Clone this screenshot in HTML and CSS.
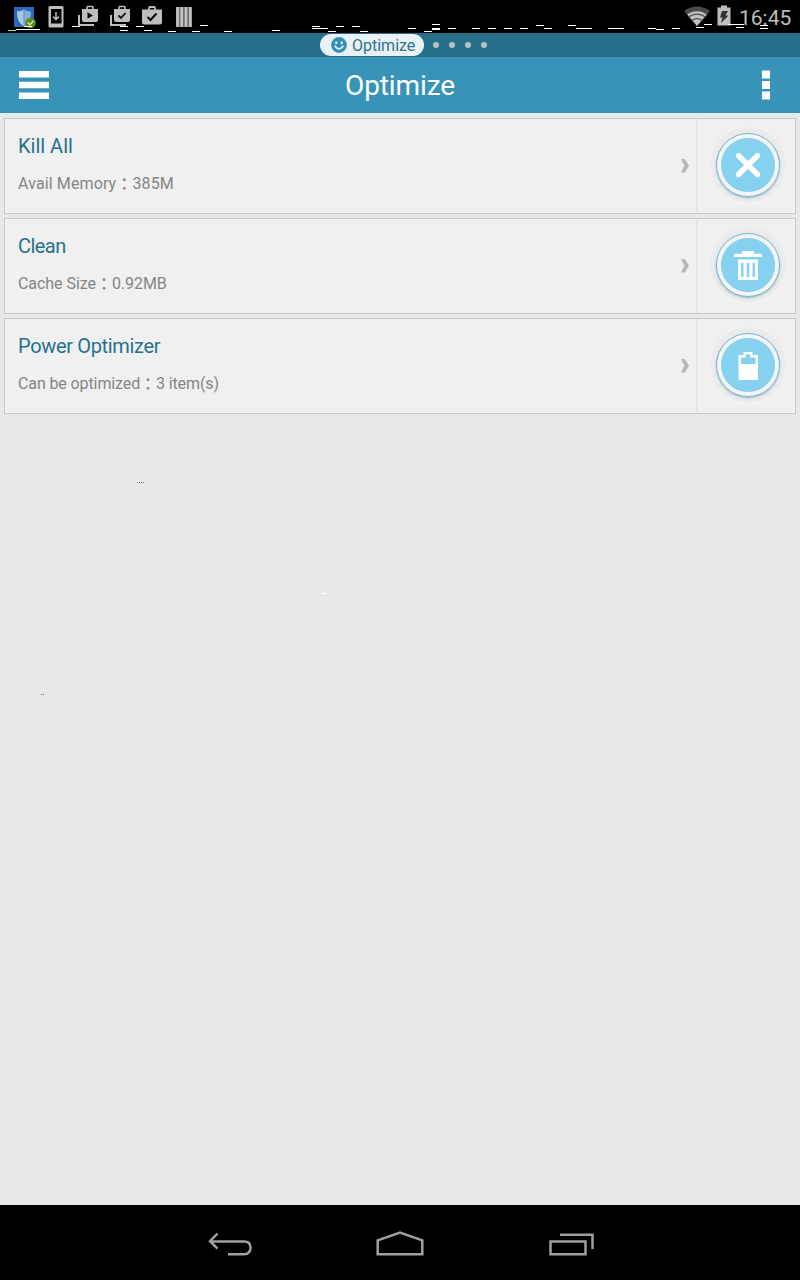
FILE: index.html
```html
<!DOCTYPE html>
<html lang="en">
<head>
<meta charset="utf-8">
<title>Optimize</title>
<link rel="stylesheet" href="styles.css">
</head>
<body>
<div class="screen">
  <div class="status">
    <svg class="status-icons" width="200" height="33" viewBox="0 0 200 33">
      <rect x="14" y="7" width="20" height="20" fill="#2868b8"/>
      <path d="M24 9.500q3 2 7 2c0 7-2 12-7 14.500c-5-2.500-7-7.500-7-14.500q4 0 7-2z" fill="#86aedb"/>
      <path d="M24 9.500q-3 2-7 2c0 7 2 12 7 14.500z" fill="#a8c4e3"/>
      <path d="M24 10v15" stroke="#5d8fc9" stroke-width="1"/>
      <circle cx="30.500" cy="23" r="5.300" fill="#568d10"/>
      <path d="M27.500 22.500l2.500 2.300 3.500-4" fill="none" stroke="#d7e8bb" stroke-width="1.300"/>
      <path fill="#bebebe" fill-rule="evenodd" d="M50 6h12a1.500 1.500 0 0 1 1.500 1.500v18.500a1.500 1.500 0 0 1-1.500 1.500h-12a1.500 1.500 0 0 1-1.500-1.500v-18.500a1.500 1.500 0 0 1 1.500-1.500zM51 9v14.500h10.500v-14.500z"/>
      <path d="M56 12v7M53 16.500l3 3 3-3" fill="none" stroke="#bebebe" stroke-width="1.500"/>
      <g id="store">
        <path d="M79 15v10h15" fill="none" stroke="#bebebe" stroke-width="2"/>
        <path d="M87 9v-1.500q0-1 1-1h4q1 0 1 1v1.500" fill="none" stroke="#bebebe" stroke-width="1.600"/>
        <path d="M82 9h16v11q0 2-2 2h-12q-2 0-2-2z" fill="#bebebe"/>
      </g>
      <path d="M87.500 12.200v6.600l5.500-3.300z" fill="#080808"/>
      <use href="#store" x="32"/>
      <path d="M118.500 15.500l2.500 2.500 4.500-5" fill="none" stroke="#080808" stroke-width="1.800"/>
      <path d="M149 10v-2q0-1 1-1h4q1 0 1 1v2" fill="none" stroke="#bebebe" stroke-width="1.800"/>
      <path d="M142 9.500h20v13q0 2-2 2h-16q-2 0-2-2z" fill="#bebebe"/>
      <path d="M147.500 17l3 3 6-6.500" fill="none" stroke="#080808" stroke-width="2"/>
      <path d="M176 7h16v20h-16z" fill="#6c6c6c"/>
      <path d="M177.500 7v20M181.700 7v20M186 7v20M190.300 7v20" stroke="#c1c1c1" stroke-width="2.700"/>
    </svg>
    <svg class="signal" width="56" height="33" viewBox="680 0 56 33">
      <path d="M697 26L684 11a21 21 0 0 1 26 0z" fill="#4a4a4a"/>
      <path d="M697 26L687.200 14.500a16 16 0 0 1 19.600 0z" fill="#c1c1c1"/>
      <path d="M688.500 17.200a13 13 0 0 1 17 0M691.800 20.500a8 8 0 0 1 10.400 0" fill="none" stroke="#555" stroke-width="1.200"/>
      <path d="M721 5.500h6v2h3.500v18h-13v-18h3.500z" fill="#bebebe"/>
      <path d="M722 11h6l-2.500 4.500h3l-7.500 7.500 1.500-5.500h-2.500z" fill="#333"/>
    </svg>
    <span class="clock">16:45</span>
  </div>
  <div class="tabs">
    <div class="tab">
      <svg width="16" height="16" viewBox="0 0 16 16"><circle cx="8" cy="8" r="7.900" fill="#3491b5"/><ellipse cx="5.300" cy="5.800" rx="1.100" ry="1.500" fill="#eaf3f5"/><ellipse cx="10.700" cy="5.800" rx="1.100" ry="1.500" fill="#eaf3f5"/><path d="M3.600 8.800q4.400 6.200 8.800 0" fill="none" stroke="#eaf3f5" stroke-width="1.500"/></svg>
      <span>Optimize</span>
    </div>
    <i class="dot"></i><i class="dot"></i><i class="dot"></i><i class="dot"></i>
  </div>
  <header class="bar">
    <svg width="30" height="28" viewBox="0 0 30 28"><path d="M0 0h30v6.500H0zM0 10.800h30v6.400H0zM0 21.500h30v6.500H0z" fill="#fff"/></svg>
    <h1>Optimize</h1>
    <svg class="more" width="8" height="30" viewBox="0 0 8 30"><path d="M0 .500h8v8H0zM0 11h8v8H0zM0 21.500h8v8H0z" fill="#fff"/></svg>
  </header>
  <main class="list">
    <section class="card memory">
      <div class="info"><h2>Kill All</h2><p>Avail Memory<span class="colon" lang="ja">：</span>385M</p></div>
      <svg class="chevron" width="8" height="14" viewBox="0 0 8 14"><path d="M0 0h3.800L8 6.700 3.800 13.500H0L3.500 6.700z" fill="#b7b7b7"/></svg>
      <div class="action"><span class="knob"><svg width="54" height="54" viewBox="0 0 54 54"><path d="M17.500 17.500l19 19M36.500 17.500l-19 19" stroke="#fff" stroke-width="5.400" stroke-linecap="round"/></svg></span></div>
    </section>
    <section class="card cache">
      <div class="info"><h2>Clean</h2><p>Cache Size<span class="colon" lang="ja">：</span>0.92MB</p></div>
      <svg class="chevron" width="8" height="14" viewBox="0 0 8 14"><path d="M0 0h3.800L8 6.700 3.800 13.500H0L3.500 6.700z" fill="#b7b7b7"/></svg>
      <div class="action"><span class="knob"><svg width="54" height="54" viewBox="0 0 54 54"><path fill="#fff" fill-rule="evenodd" d="M21 13h12v2.800h8v3.200H13v-3.200h8zM17 21.500h20V42H17zM20 25v14h2.500V25zM25.700 25v14h2.600V25zM31.500 25v14H34V25z"/></svg></span></div>
    </section>
    <section class="card power">
      <div class="info"><h2>Power Optimizer</h2><p>Can be optimized<span class="colon" lang="ja">：</span>3 item(s)</p></div>
      <svg class="chevron" width="8" height="14" viewBox="0 0 8 14"><path d="M0 0h3.800L8 6.700 3.800 13.500H0L3.500 6.700z" fill="#b7b7b7"/></svg>
      <div class="action"><span class="knob"><svg width="54" height="54" viewBox="0 0 54 54"><path fill="#fff" fill-rule="evenodd" d="M22.500 14h9v3H37v25H17.500V17h5zM24.800 16.200v3.300H20V26h14.500v-6.500h-5.300v-3.300z"/></svg></span></div>
    </section>
  </main>
  <nav class="nav">
    <svg width="800" height="75" viewBox="0 1205 800 75" fill="none" stroke="#a0a0a0" stroke-width="2.500">
      <path d="M210.500 1241.500H244q6.500 0 6.500 6.200T244 1254.300h-16M217.500 1233.500l-7.500 7.700 7.500 7.500"/>
      <path d="M377.700 1254.300v-14l22.300-7.800 22.300 7.800v14z"/>
      <path d="M550.500 1241.500h35v12.800h-35zM560 1234.700h32.500v14.300"/>
    </svg>
  </nav>
  <svg class="specks" width="800" height="700" viewBox="0 0 800 700" stroke="#fff" stroke-width="1">
    <path d="M24 26.500h8M16 29.500h24M72 26.500h8M120 26.500h8M120 30.500h8M136 26.500h8M144 30.500h8M168 31.500h8M192 31.500h8M200 25.500h8M224 31.500h8M272 30.500h8M312 26.500h8M312 28.500h16M328 31.500h8M336 26.500h8M352 26.500h8M360 31.500h8M408 28.500h8M424 31.500h8M432 24.500h8M432 28.500h8M432 29.500h8M448 28.500h8M472 28.500h8M488 28.500h8M504 28.500h8M520 28.500h8M536 25.500h8M544 28.500h8M568 25.500h8M576 28.500h16M608 28.500h16M648 28.500h8M656 29.500h8M672 28.500h8M696 27.500h8M704 24.500h8M728 24.500h16M736 27.500h8M760 25.500h8M760 28.500h8M322 593.500h5"/>
    <path d="M8 30.500h8" stroke="#8eea8e"/>
    <path d="M137 482.500h7M41 694.500h3" stroke="#777" stroke-dasharray="1 1"/>
  </svg>
</div>
</body>
</html>
```
FILE: styles.css
```css
* { box-sizing: border-box; }
body { margin: 0; font-family: Roboto, "Noto Sans CJK JP", sans-serif; }
h1, h2, p { margin: 0; font-weight: 400; }
svg { display: block; flex: none; }
.screen { position: relative; display: flex; flex-direction: column; width: 800px; height: 1280px; background: #e8e8e8; }
.status { display: flex; height: 33px; background: #000; }
.signal { margin-left: auto; }
.clock { width: 64px; padding: 2px 0 0 3px; font-size: 21px; line-height: 33px; color: #bebebe; }
.tabs { display: flex; align-items: center; height: 24px; padding-left: 320px; background: #256f8a; }
.tab { display: flex; align-items: center; gap: 5px; width: 104px; height: 22px; margin-right: 9px; padding-left: 11px; border-radius: 11px; background: #e9f1f4; color: #2b7390; font-size: 16px; line-height: 22px; }
.tab span { padding-top: 2px; }
.dot { width: 6px; height: 6px; margin-right: 10px; border-radius: 50%; background: #b8bfc2; box-shadow: 0 0 1px #2f96bd; }
.bar { display: flex; align-items: center; height: 56px; padding: 0 30px 0 19px; background: #3793b7; color: #fff; }
.bar h1 { flex: 1; padding: 2px 0 0 296px; font-size: 28px; line-height: 54px; letter-spacing: -.1px; }
.list { flex: 1; display: flex; flex-direction: column; gap: 4px; padding: 5px 4px; }
.card { display: flex; align-items: center; height: 96px; border: 1px solid #c8c8c8; background: #f0f0f0; }
.info { flex: 1; align-self: stretch; padding: 15px 0 0 13px; }
.info h2 { font-size: 20px; line-height: 24px; color: #26718f; }
.info p { margin-top: 14px; font-size: 16px; line-height: 24px; color: #858585; white-space: nowrap; }
.cache h2 { letter-spacing: -.55px; }
.power h2 { letter-spacing: -.33px; }
.memory p { letter-spacing: .12px; }
.cache p { letter-spacing: -.05px; }
.power p { letter-spacing: -.11px; }
.colon { position: relative; top: 1px; font-family: "Noto Sans CJK JP", sans-serif; font-weight: 500; line-height: 1; }
.chevron { margin-right: 7px; }
.action { display: flex; align-items: center; justify-content: center; width: 99px; height: 94px; padding-left: 3px; border-left: 2px solid #e6e6e6; }
.knob { display: flex; align-items: center; justify-content: center; width: 64px; height: 64px; margin-top: -3px; border: 1.5px solid #72b5d2; border-radius: 50%; background: radial-gradient(circle, #87d1f0 26.5px, #f4f4f4 27.500px); box-shadow: 0 1px 2px #8fb0be, 0 0 0 6px #ebebeb, 0 1px 0 6px #f7f7f7; }
.nav { height: 75px; background: #000; }
.specks { position: absolute; top: 0; left: 0; }
```
